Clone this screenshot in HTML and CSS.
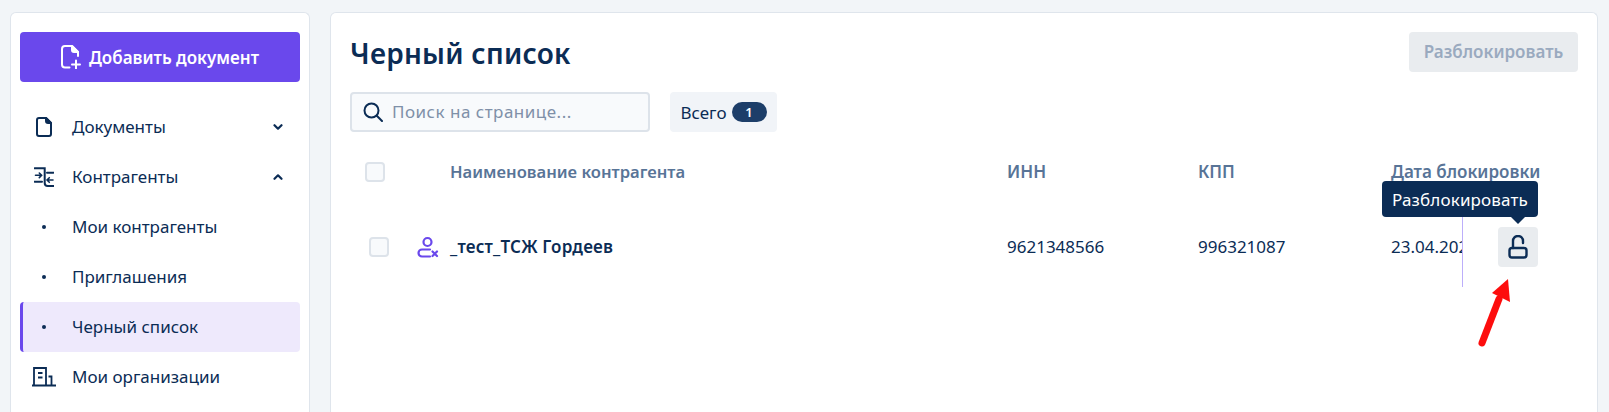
FILE: index.html
```html
<!DOCTYPE html>
<html lang="ru">
<head>
<meta charset="utf-8">
<title>Черный список</title>
<link rel="stylesheet" href="styles.css">
</head>
<body>
<div class="layout">
  <aside class="sidebar">
    <button class="add-btn">
      <svg class="add-icon" viewBox="0 0 20 24" fill="none" stroke="currentColor" stroke-width="2" stroke-linecap="round" stroke-linejoin="round"><path d="M8.500 22.500H4a3 3 0 0 1-3-3V4a3 3 0 0 1 3-3h7l6 6v4"/><path d="M11 1l6 6h-4a2 2 0 0 1-2-2z" fill="currentColor"/><path d="M15 15.500v8M11 19.500h8"/></svg>
      Добавить документ
    </button>
    <nav class="nav">
      <a class="nav-item">
        <span class="nav-ic"><svg width="16" height="20" viewBox="0 0 16 20" fill="none" stroke="#0b2c55" stroke-width="2" stroke-linejoin="round"><path d="M3 1h7l5 5v11a2 2 0 0 1-2 2H3a2 2 0 0 1-2-2V3a2 2 0 0 1 2-2z"/><path d="M10 1l5 5h-3a2 2 0 0 1-2-2z" fill="#0b2c55"/></svg></span>
        <span class="nav-label">Документы</span>
        <svg class="chev" viewBox="0 0 10 6" fill="none" stroke="#0b2c55" stroke-width="2.200" stroke-linecap="round" stroke-linejoin="round"><path d="M1.500 1.200L5 4.700l3.500-3.500"/></svg>
      </a>
      <a class="nav-item">
        <span class="nav-ic"><svg width="20" height="20" viewBox="0 0 20 20" fill="none" stroke="#0b2c55" stroke-width="2" stroke-linecap="round"><path d="M0.500 1.300h10.200v14.700a3 3 0 0 0 3 3H19.500"/><path d="M0.500 14.700H8M13 5.700h6.500"/><path d="M1.500 8.300h6M5.300 6l2.300 2.300-2.300 2.300" stroke-width="1.600"/><path d="M19 13h-6M15.300 10.700L13 13l2.300 2.300" stroke-width="1.600"/></svg></span>
        <span class="nav-label">Контрагенты</span>
        <svg class="chev" viewBox="0 0 10 6" fill="none" stroke="#0b2c55" stroke-width="2.200" stroke-linecap="round" stroke-linejoin="round"><path d="M1.500 4.800L5 1.300l3.500 3.500"/></svg>
      </a>
      <a class="nav-item"><span class="nav-ic"><i class="dot"></i></span><span class="nav-label">Мои контрагенты</span></a>
      <a class="nav-item"><span class="nav-ic"><i class="dot"></i></span><span class="nav-label">Приглашения</span></a>
      <a class="nav-item active"><span class="nav-ic"><i class="dot"></i></span><span class="nav-label">Черный список</span></a>
      <a class="nav-item">
        <span class="nav-ic"><svg width="24" height="20" viewBox="0 0 24 20" fill="none" stroke="#0b2c55" stroke-width="1.800"><path d="M0 18.500h24M2 18.500V1h12v17.500M16.500 9.500h3v9"/><path d="M6 6h4.500M6 10.500h4.500"/></svg></span>
        <span class="nav-label">Мои организации</span>
      </a>
    </nav>
  </aside>
  <main class="content">
    <header class="top">
      <h1 class="title">Черный список</h1>
      <button class="unblock-btn" disabled>Разблокировать</button>
    </header>
    <div class="filters">
      <div class="search">
        <svg width="20" height="20" viewBox="0 0 20 20" fill="none" stroke="#0b2c55" stroke-width="2" stroke-linecap="round"><circle cx="8.500" cy="8.500" r="7"/><path d="M13.800 13.800L19 19"/></svg>
        <span class="placeholder">Поиск на странице...</span>
      </div>
      <div class="total">Всего <span class="badge">1</span></div>
    </div>
    <div class="table">
      <div class="row head">
        <div class="c-check"><span class="checkbox"></span></div>
        <div class="c-name">Наименование контрагента</div>
        <div class="c-inn">ИНН</div>
        <div class="c-kpp">КПП</div>
        <div class="c-date">Дата блокировки</div>
      </div>
      <div class="row body">
        <div class="c-check">
          <span class="checkbox"></span>
          <svg class="user-x" width="23" height="22" viewBox="0 0 23 22" fill="none" stroke="#6a48ec" stroke-width="2.200" stroke-linecap="round"><circle cx="10.500" cy="6" r="4"/><path d="M13 13.500H5a3.500 3.500 0 0 0 0 7h8"/><path d="M15.500 15.500l4.500 4.500M20 15.500L15.500 20"/></svg>
        </div>
        <div class="c-name strong">_тест_ТСЖ Гордеев</div>
        <div class="c-inn">9621348566</div>
        <div class="c-kpp">996321087</div>
        <div class="c-date-clip">23.04.2024</div>
        <div class="c-action">
          <div class="tooltip">Разблокировать</div>
          <button class="lock-btn">
            <svg width="20" height="24" viewBox="0 0 20 24" fill="none" stroke="#0b2c55" stroke-width="2.400" stroke-linecap="round"><rect x="1.500" y="13" width="17" height="9.500" rx="2.500"/><path d="M5 13V6a5 5 0 0 1 10 0v2"/></svg>
          </button>
        </div>
      </div>
    </div>
    <svg class="red-arrow" width="44" height="70" viewBox="0 0 44 70"><path d="M5 64L22 20" stroke="#fd0d0d" stroke-width="7" stroke-linecap="round"/><path d="M31 0L33 23L15 14z" fill="#fd0d0d"/></svg>
  </main>
</div>
</body>
</html>
```
FILE: styles.css
```css
* { box-sizing: border-box; }
html, body { margin: 0; height: 100%; overflow: hidden; }
body {
  background: #f2f5f8;
  font-family: "Noto Sans", "Open Sans", sans-serif;
  color: #0b2c55;
  font-size: 17px;
}
.layout {
  display: flex;
  gap: 20px;
  padding: 12px 11px 0 10px;
  height: 412px;
}
.sidebar, .content {
  background: #fff;
  border: 1px solid #dfe5ec;
  border-bottom: 0;
  border-radius: 6px 6px 0 0;
}
.sidebar {
  width: 300px;
  flex: none;
  padding: 19px 9px 0;
}
.add-btn {
  width: 280px;
  height: 50px;
  background: #6a48ec;
  border: 0;
  border-radius: 4px;
  color: #fff;
  font: 600 17px "Noto Sans", sans-serif;
  display: flex;
  align-items: center;
  justify-content: center;
  gap: 8px;
  padding: 0;
}
.add-icon { width: 20px; height: 24px; }
.nav { margin-top: 20px; display: flex; flex-direction: column; }
.nav-item {
  height: 50px;
  display: flex;
  align-items: center;
  color: #0b2c55;
  border-radius: 4px;
  padding-right: 17px;
}
.nav-item.active {
  background: #eee9fc;
  border-left: 3px solid #6a48ec;
}
.nav-ic {
  width: 52px;
  flex: none;
  display: flex;
  justify-content: center;
  padding-right: 6px;
  padding-left: 2px;
}
.nav-item.active .nav-ic { width: 49px; padding-left: 0; padding-right: 7px; }
.nav-label { flex: 1; padding-bottom: 2px; }
.chev { width: 10px; height: 6px; flex: none; }
.dot { width: 4px; height: 4px; border-radius: 50%; background: #0b2c55; display: block; }
.content {
  flex: 1;
  padding: 19px 19px 0;
  position: relative;
  min-width: 0;
}
.top { display: flex; justify-content: space-between; align-items: flex-start; height: 60px; }
.title { margin: 0; font-size: 28px; letter-spacing: 0.25px; font-weight: 600; line-height: 42px; color: #0b2c55; }
.unblock-btn {
  width: 169px;
  height: 40px;
  background: #e9ecef;
  border: 0;
  border-radius: 4px;
  color: #9aaabf;
  font: 600 17px "Noto Sans", sans-serif;
  padding: 0 0 2px;
}
.filters { display: flex; gap: 20px; }
.search {
  width: 300px;
  height: 40px;
  background: #f8fafc;
  border: 2px solid #dde3ea;
  border-radius: 4px;
  display: flex;
  align-items: center;
  gap: 9px;
  padding-left: 11px;
}
.placeholder { color: #7f90a8; letter-spacing: 0.5px; padding-bottom: 2px; }
.total {
  height: 40px;
  width: 107px;
  background: #f1f4f8;
  border-radius: 4px;
  display: flex;
  align-items: center;
  justify-content: center;
  gap: 5px;
}
.badge {
  width: 35px;
  height: 20px;
  border-radius: 10px;
  background: #1d3e69;
  color: #fff;
  font-size: 13px;
  font-weight: 600;
  display: flex;
  align-items: center;
  justify-content: center;
}
.table { margin-top: 5px; width: 1188px; }
.row { display: flex; align-items: center; }
.head { height: 70px; font-weight: 600; color: #587497; }
.head .c-name { font-size: 16.6px; }
.body { height: 80px; }
.c-name, .c-inn, .c-kpp, .c-date, .c-date-clip { padding-bottom: 2px; }
.c-check { width: 100px; flex: none; display: flex; align-items: center; }
.head .c-check { padding-left: 15px; }
.body .c-check { padding-left: 19px; }
.checkbox {
  width: 20px;
  height: 20px;
  border: 2px solid #dde3ea;
  border-radius: 4px;
  background: #f8fafc;
  flex: none;
}
.user-x { margin-left: 28px; flex: none; }
.c-name { width: 557px; flex: none; }
.strong { font-weight: 600; color: #0b2c55; letter-spacing: 0.2px; }
.c-inn { width: 191px; flex: none; }
.c-kpp { width: 193px; flex: none; }
.c-date { white-space: nowrap; }
.c-date-clip { width: 71px; flex: none; overflow: hidden; white-space: nowrap; }
.c-action {
  width: 76px;
  height: 70px;
  margin-top: 10px;
  flex: none;
  border-left: 1px solid #bcaefa;
  position: relative;
  display: flex;
  justify-content: flex-end;
}
.lock-btn {
  width: 40px;
  height: 40px;
  background: #e9ecef;
  border: 0;
  border-radius: 4px;
  padding: 0;
  display: flex;
  align-items: center;
  justify-content: center;
  margin-top: 10px;
}
.tooltip {
  position: absolute;
  right: 0;
  top: -36px;
  width: 156px;
  height: 36px;
  background: #0b2c55;
  color: #fff;
  border-radius: 4px;
  display: flex;
  align-items: center;
  justify-content: center;
  letter-spacing: 0.15px;
}
.tooltip::after {
  content: "";
  position: absolute;
  right: 13px;
  top: 36px;
  border: 7px solid transparent;
  border-top-color: #0b2c55;
  border-bottom: 0;
}
.red-arrow { position: absolute; left: 1146px; top: 266px; }
```
